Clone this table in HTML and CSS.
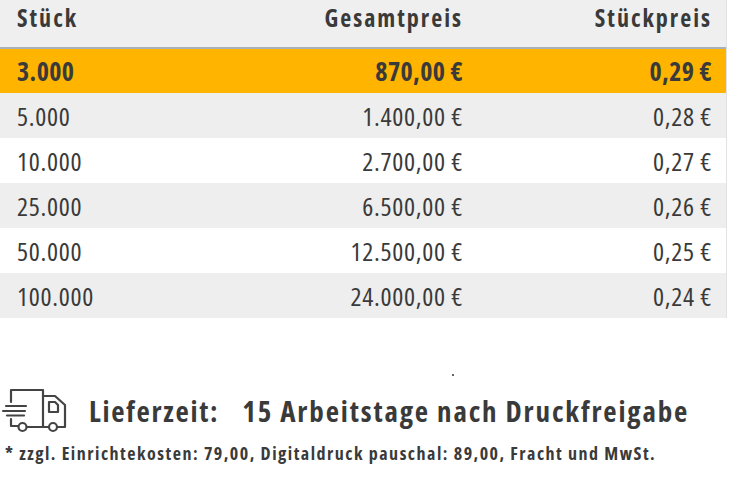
FILE: index.html
```html
<!DOCTYPE html>
<html lang="de">
<head>
<meta charset="utf-8">
<title>Staffelpreise</title>
<link rel="stylesheet" href="styles.css">
</head>
<body>
<div class="prices">
  <div class="row head">
    <div class="cell qty">Stück</div>
    <div class="cell">Gesamtpreis</div>
    <div class="cell">Stückpreis</div>
  </div>
  <div class="row active">
    <div class="cell qty">3.000</div>
    <div class="cell">870,00 €</div>
    <div class="cell">0,29 €</div>
  </div>
  <div class="row alt">
    <div class="cell qty">5.000</div>
    <div class="cell">1.400,00 €</div>
    <div class="cell">0,28 €</div>
  </div>
  <div class="row">
    <div class="cell qty">10.000</div>
    <div class="cell">2.700,00 €</div>
    <div class="cell">0,27 €</div>
  </div>
  <div class="row alt">
    <div class="cell qty">25.000</div>
    <div class="cell">6.500,00 €</div>
    <div class="cell">0,26 €</div>
  </div>
  <div class="row">
    <div class="cell qty">50.000</div>
    <div class="cell">12.500,00 €</div>
    <div class="cell">0,25 €</div>
  </div>
  <div class="row alt">
    <div class="cell qty">100.000</div>
    <div class="cell">24.000,00 €</div>
    <div class="cell">0,24 €</div>
  </div>
</div>
<div class="spacer"><span class="dot"></span></div>
<div class="delivery">
  <svg class="truck" width="70" height="50" viewBox="0 0 70 50" fill="none" stroke="#444" stroke-width="2.2" stroke-linecap="round" stroke-linejoin="round">
    <path d="M11 17 V5 H43 V41"/>
    <path d="M43 11 H55 L65 20 V42 H58"/>
    <path d="M49 17 H55 L58 20 V27 H49 Z"/>
    <path d="M6 21 H26"/>
    <path d="M3 26 H25"/>
    <path d="M7 30.5 H24"/>
    <path d="M11 34 V41 H18"/>
    <path d="M27 42 H48"/>
    <circle cx="22.5" cy="42" r="4"/>
    <circle cx="53" cy="42" r="4"/>
  </svg>
  <span class="label">Lieferzeit:</span>
  <span class="value">15 Arbeitstage nach Druckfreigabe</span>
</div>
<p class="note">* zzgl. Einrichtekosten: 79,00, Digitaldruck pauschal: 89,00, Fracht und MwSt.</p>
</body>
</html>
```
FILE: styles.css
```css
html, body {
  margin: 0;
  padding: 0;
  background: #ffffff;
}
body {
  font-family: "Open Sans", "DejaVu Sans Condensed", sans-serif;
  font-stretch: 75%;
  color: #3a3a3a;
  width: 730px;
}
.prices {
  width: 726px;
  border-right: 1px solid #dfe3e6;
}
.row {
  display: grid;
  grid-template-columns: 1fr 250px 249px;
  height: 45px;
  align-items: center;
  font-size: 26px;
  letter-spacing: 0.7px;
}
.row.head {
  background: #efefef;
  border-bottom: 2px solid #a9b1b8;
  font-weight: bold;
  font-size: 24px;
  letter-spacing: 2px;
  align-items: start;
  padding-top: 1px;
  box-sizing: border-box;
  height: 49px;
}
.row.active {
  background: #ffb500;
  font-weight: bold;
  font-size: 26px;
  letter-spacing: 0.4px;
  height: 44px;
}
.row.alt {
  background: #eeeeee;
}
.cell {
  text-align: right;
  padding: 0 14px 0 0;
  white-space: nowrap;
}
.cell.qty {
  text-align: left;
  padding: 0 0 0 17px;
}
.spacer {
  height: 67px;
  position: relative;
}
.dot {
  position: absolute;
  left: 452px;
  top: 56px;
  width: 2px;
  height: 2px;
  background: #333;
  border-radius: 1px;
}
.delivery {
  display: flex;
  align-items: center;
  height: 50px;
  white-space: nowrap;
}
.truck {
  margin-right: 19px;
  flex: none;
}
.label {
  font-weight: bold;
  font-size: 29px;
  letter-spacing: 1.7px;
  margin-right: 23px;
}
.value {
  font-weight: bold;
  font-size: 29px;
  letter-spacing: 1.85px;
}
.note {
  margin: 6px 0 0 5px;
  font-weight: bold;
  font-size: 18px;
  letter-spacing: 1.5px;
  white-space: nowrap;
}
```
